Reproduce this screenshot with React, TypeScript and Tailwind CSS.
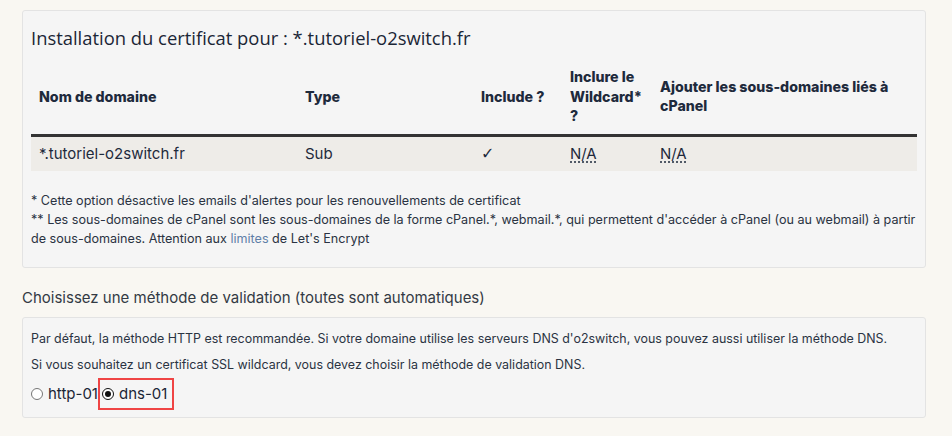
import React from "react";

export default function App() {
  const body = { fontFamily: "Inter, 'Noto Sans', sans-serif" } as React.CSSProperties;
  return (
    <div className="w-[952px] h-[436px] bg-[#f9f7f2] pt-[10px] pl-[22px] text-[#1e2a3c]" style={body}>
      <div className="w-[904px] h-[258px] bg-[#f5f5f5] border border-[#e3e3e3] rounded-[3px] pt-[14px] px-[8px]">
        <div className="text-[18.4px] leading-[26px] text-[#1b2636]" style={{ fontFamily: "'Open Sans', sans-serif" }}>
          Installation du certificat pour : *.tutoriel-o2switch.fr
        </div>
        <table className="mt-[11px] w-[886px] border-collapse table-fixed">
          <colgroup>
            <col className="w-[266px]" />
            <col className="w-[176px]" />
            <col className="w-[89px]" />
            <col className="w-[90px]" />
            <col className="w-[265px]" />
          </colgroup>
          <thead>
            <tr className="border-b-[3px] border-[#333333]">
              <th className="text-left align-middle px-[8px] pt-[5px] pb-[8px] text-[14.2px] leading-[19.5px] font-extrabold">Nom de domaine</th>
              <th className="text-left align-middle px-[8px] pt-[5px] pb-[8px] text-[14.2px] leading-[19.5px] font-extrabold">Type</th>
              <th className="text-left align-middle px-[8px] pt-[5px] pb-[8px] text-[14.2px] leading-[19.5px] font-extrabold">Include ?</th>
              <th className="text-left align-middle px-[8px] pt-[5px] pb-[8px] text-[14.2px] leading-[19.5px] font-extrabold">Inclure le Wildcard* ?</th>
              <th className="text-left align-middle px-[8px] pt-[5px] pb-[8px] text-[14.2px] leading-[19.5px] font-extrabold">Ajouter les sous-domaines liés à cPanel</th>
            </tr>
          </thead>
          <tbody>
            <tr className="bg-[#eeece8] h-[36px] text-[15px]">
              <td className="px-[8px]">*.tutoriel-o2switch.fr</td>
              <td className="px-[8px]">Sub</td>
              <td className="px-[8px] text-[16px]" style={{ fontFamily: "'DejaVu Sans', sans-serif" }}>✓</td>
              <td className="px-[8px]"><span className="underline decoration-dotted underline-offset-[3px]">N/A</span></td>
              <td className="px-[8px]"><span className="underline decoration-dotted underline-offset-[3px]">N/A</span></td>
            </tr>
          </tbody>
        </table>
        <div className="mt-[20px] text-[12.6px] leading-[19px] text-[#2a3342]">
          <p>* Cette option désactive les emails d'alertes pour les renouvellements de certificat</p>
          <p>
            ** Les sous-domaines de cPanel sont les sous-domaines de la forme cPanel.*, webmail.*, qui permettent d'accéder à cPanel (ou au webmail) à partir de sous-domaines. Attention aux <a className="text-[#5f7fa8]">limites</a> de Let's Encrypt
          </p>
        </div>
      </div>
      <div className="mt-[19px] text-[15px] leading-[22px] text-[#333a44]">
        Choisissez une méthode de validation (toutes sont automatiques)
      </div>
      <div className="mt-[8px] w-[904px] h-[101px] bg-[#f5f5f5] border border-[#e3e3e3] rounded-[3px] px-[8px] pt-[13px] text-[12.45px] text-[#2a3342]">
        <p className="leading-[16px] whitespace-nowrap">Par défaut, la méthode HTTP est recommandée. Si votre domaine utilise les serveurs DNS d'o2switch, vous pouvez aussi utiliser la méthode DNS.</p>
        <p className="mt-[10px] leading-[16px] whitespace-nowrap">Si vous souhaitez un certificat SSL wildcard, vous devez choisir la méthode de validation DNS.</p>
        <div className="mt-[5px] flex items-center text-[15px] text-[#1b2636]">
          <span className="w-[12px] h-[12px] rounded-full border border-[#767676] bg-white" />
          <span className="ml-[5px]">http-01</span>
          <div className="flex items-center border-2 border-[#ef4444] h-[32px] pl-[2px] pr-[5px]">
            <span className="w-[12px] h-[12px] rounded-full border-[1.5px] border-[#111] bg-white flex items-center justify-center">
              <span className="w-[6px] h-[6px] rounded-full bg-[#111]" />
            </span>
            <span className="ml-[5px]">dns-01</span>
          </div>
        </div>
      </div>
    </div>
  );
}
